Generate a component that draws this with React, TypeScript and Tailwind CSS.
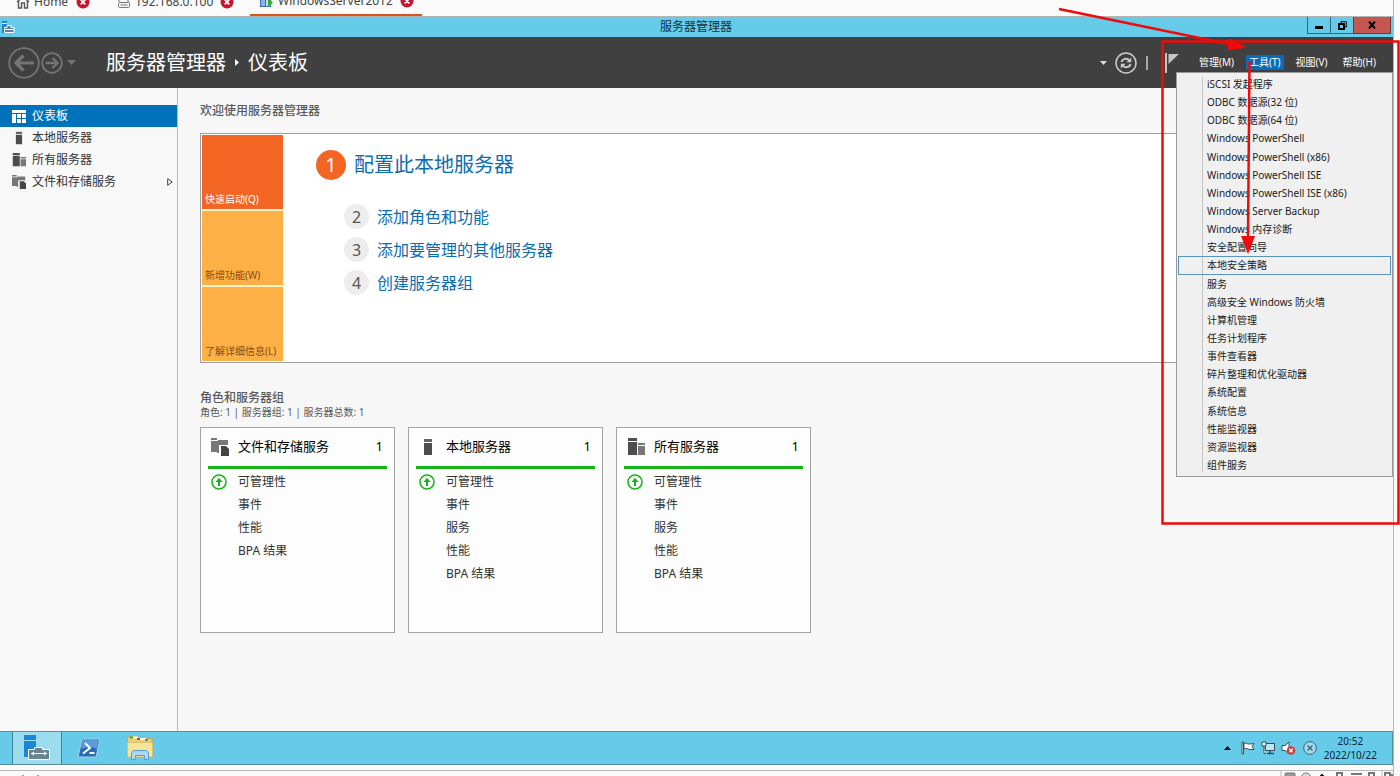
import type { ReactNode } from "react";

const tools = [
  "iSCSI 发起程序",
  "ODBC 数据源(32 位)",
  "ODBC 数据源(64 位)",
  "Windows PowerShell",
  "Windows PowerShell (x86)",
  "Windows PowerShell ISE",
  "Windows PowerShell ISE (x86)",
  "Windows Server Backup",
  "Windows 内存诊断",
  "安全配置向导",
  "本地安全策略",
  "服务",
  "高级安全 Windows 防火墙",
  "计算机管理",
  "任务计划程序",
  "事件查看器",
  "碎片整理和优化驱动器",
  "系统配置",
  "系统信息",
  "性能监视器",
  "资源监视器",
  "组件服务",
];

const menus = ["管理(M)", "工具(T)", "视图(V)", "帮助(H)"];

const steps = ["添加角色和功能", "添加要管理的其他服务器", "创建服务器组"];

function DashboardIcon() {
  return (
    <svg width="14" height="13" viewBox="0 0 14 13" fill="#fff" aria-hidden="true">
      <path d="M0 0h14v3H0zM0 4h4v9H0zM5 4h4v4H5zM10 4h4v4h-4zM5 9h4v4H5zM10 9h4v4h-4z" />
    </svg>
  );
}

function ServerIcon({ size = 14 }: { size?: number }) {
  return (
    <svg width={size} height={size} viewBox="0 0 18 18" fill="#4d4d4d" aria-hidden="true">
      <path d="M5 1h8v3H5z" fill="#666" />
      <path d="M5 5h8v12H5z" />
    </svg>
  );
}

function ServersIcon({ size = 14 }: { size?: number }) {
  return (
    <svg width={size} height={size} viewBox="0 0 18 18" fill="#4d4d4d" aria-hidden="true">
      <path d="M1 0h9v3H1zM1 4h9v13H1z" />
      <path d="M11 5h7v2h-7zM11 8h7v9h-7z" fill="#777" />
    </svg>
  );
}

function StorageIcon({ size = 14 }: { size?: number }) {
  return (
    <svg width={size} height={size} viewBox="0 0 18 18" fill="#777" aria-hidden="true">
      <path d="M0 0h6v2H0zM0 3h7V2h10v5h-7v8H6v-1H0z" />
      <path d="M8 7h7v10H8z" fill="#fff" />
      <path d="M10 8h5l3 3v7h-8z" fill="#444" />
    </svg>
  );
}

const nav = [
  { label: "仪表板", icon: <DashboardIcon />, active: true },
  { label: "本地服务器", icon: <ServerIcon /> },
  { label: "所有服务器", icon: <ServersIcon /> },
  { label: "文件和存储服务", icon: <StorageIcon />, more: true },
];

const cards = [
  { title: "文件和存储服务", icon: <StorageIcon size={18} />, rows: ["事件", "性能", "BPA 结果"] },
  { title: "本地服务器", icon: <ServerIcon size={18} />, rows: ["事件", "服务", "性能", "BPA 结果"] },
  { title: "所有服务器", icon: <ServersIcon size={18} />, rows: ["事件", "服务", "性能", "BPA 结果"] },
];

function CloseBadge() {
  return (
    <svg width="14" height="14" viewBox="0 0 14 14" aria-hidden="true">
      <circle cx="7" cy="7" r="6.5" fill="#c8142d" />
      <path d="M4.7 4.7l4.6 4.6M9.3 4.7L4.7 9.3" stroke="#fff" strokeWidth="1.8" />
    </svg>
  );
}

function Tab({ label, icon, className }: { label: string; icon: ReactNode; className: string }) {
  return (
    <div className={`flex h-7 items-center ${className}`}>
      {icon}
      <span className="flex-1 pl-1 text-xs text-[#444]">{label}</span>
      <button type="button" aria-label={`关闭 ${label}`}>
        <CloseBadge />
      </button>
    </div>
  );
}

function HostTabs() {
  return (
    <div className="flex h-[17px] items-end overflow-hidden border-b border-[#b5b5b5] bg-[#fafafa]">
      <Tab
        label="Home"
        className="w-[90px]"
        icon={
          <svg className="ml-4" width="14" height="14" viewBox="0 0 14 14" fill="none" stroke="#555" strokeWidth="1.4" aria-hidden="true">
            <path d="M1 7l6-5.5L13 7M2.5 6v7h3V8h3v5h3V6" />
          </svg>
        }
      />
      <Tab
        label="192.168.0.100"
        className="ml-[26px] w-[118px]"
        icon={
          <svg width="15" height="14" viewBox="0 0 15 14" fill="#f4f4f4" stroke="#777" aria-hidden="true">
            <path d="M3.5 7l-2-5h9l2 5" />
            <rect x="2.5" y="7.5" width="11" height="5" rx="1" />
            <path d="M4.5 10h7" />
          </svg>
        }
      />
      <Tab
        label="WindowsServer2012"
        className="ml-4 w-[172px] border-b-2 border-[#d9541e] pr-2 pl-2"
        icon={
          <svg className="ml-px" width="15" height="14" viewBox="0 0 15 14" aria-hidden="true">
            <rect x="1.5" y="1.5" width="6" height="11" fill="#8eb4e3" stroke="#3b6cb0" />
            <rect x="6.5" y="3.5" width="5" height="9" fill="#c8dcf2" stroke="#3b6cb0" />
            <path d="M9 4l5 4.500-5 4.500z" fill="#3cab2c" />
          </svg>
        }
      />
    </div>
  );
}

function TitleBar() {
  return (
    <div className="flex h-5 items-center bg-[#65cbe9]">
      <svg className="ml-px" width="14" height="14" viewBox="0 0 14 14" aria-hidden="true">
        <path d="M1 1h5v12H1z" fill="#1f86c9" />
        <path d="M1 3.500h5" stroke="#fff" />
        <path d="M3.500 7.500h2.500v-2h4v2h3v5H3.500z" fill="#5f8396" stroke="#fff" />
        <path d="M4 9.500h9" stroke="#fff" />
      </svg>
      <h1 className="flex-1 pl-[70px] text-center text-xs text-[#14303c]">服务器管理器</h1>
      <div className="flex h-full pr-0.5 pb-[3px]">
        <button type="button" aria-label="最小化" className="flex w-6 items-end justify-center border border-t-0 border-[#33697a] pb-1">
          <span className="h-[3px] w-2 bg-black" />
        </button>
        <button type="button" aria-label="还原" className="flex w-[22px] items-center justify-center border-b border-[#33697a]">
          <svg width="9" height="9" viewBox="0 0 9 9" fill="none" stroke="#000" aria-hidden="true">
            <path d="M3 2V.7h5.300V6H7" />
            <path d="M1 3h5v5H1z" strokeWidth="2" />
          </svg>
        </button>
        <button type="button" aria-label="关闭" className="flex w-[38px] items-center justify-center border border-t-0 border-[#6a3a3a] bg-[#c65750]">
          <svg width="8" height="8" viewBox="0 0 8 8" stroke="#000" strokeWidth="2" aria-hidden="true">
            <path d="M1 .5l6 7M7 .5l-6 7" />
          </svg>
        </button>
      </div>
    </div>
  );
}

function ToolsMenu() {
  return (
    <div
      role="menu"
      className="absolute top-[35px] right-0 z-10 flex h-[405px] w-[217px] flex-col border border-[#999] bg-[#f0f0f0] px-px py-0.5"
    >
      <span className="absolute top-1 bottom-1 left-[25px] w-px bg-[#c4c4c4]" />
      {tools.map((name) => (
        <button
          key={name}
          type="button"
          role="menuitem"
          className={`relative flex flex-1 items-center border pl-7 text-left text-[10px] leading-none whitespace-nowrap text-[#1a1a1a] ${
            name === "本地安全策略" ? "border-[#5a93bd]" : "border-transparent"
          }`}
        >
          {name}
        </button>
      ))}
    </div>
  );
}

function Header() {
  return (
    <header className="relative flex h-[51px] items-center bg-[#404040] text-white">
      <button type="button" aria-label="后退" className="ml-2">
        <svg width="32" height="32" viewBox="0 0 32 32" fill="none" stroke="#757575" aria-hidden="true">
          <circle cx="16" cy="16" r="14.800" strokeWidth="1.800" />
          <path d="M26 16H9M15.500 8.500L8 16l7.500 7.500" strokeWidth="3.200" />
        </svg>
      </button>
      <button type="button" aria-label="前进" className="ml-px">
        <svg width="22" height="22" viewBox="0 0 22 22" fill="none" stroke="#757575" aria-hidden="true">
          <circle cx="11" cy="11" r="9.800" strokeWidth="1.800" />
          <path d="M4.500 11h11M11.500 6l5 5-5 5" strokeWidth="2.300" />
        </svg>
      </button>
      <button type="button" aria-label="历史记录" className="ml-1">
        <svg width="9" height="6" viewBox="0 0 9 6" fill="#757575" aria-hidden="true">
          <path d="M0 0h9L4.500 5z" />
        </svg>
      </button>
      <nav className="ml-[30px] flex flex-1 items-center text-xl leading-none">
        <span>服务器管理器</span>
        <svg className="mx-[9px]" width="4" height="7" viewBox="0 0 4 7" fill="#fff" aria-hidden="true">
          <path d="M0 0l4 3.500L0 7z" />
        </svg>
        <span>仪表板</span>
      </nav>
      <svg width="7" height="4" viewBox="0 0 7 4" fill="#ddd" aria-hidden="true">
        <path d="M0 0h7L3.500 4z" />
      </svg>
      <button type="button" aria-label="刷新" className="ml-2">
        <svg width="22" height="22" viewBox="0 0 22 22" fill="none" stroke="#ccc" aria-hidden="true">
          <circle cx="11" cy="11" r="10" strokeWidth="1.500" />
          <path d="M6.500 10c.5-2.800 4.500-4.300 7.500-2M15.500 12c-.5 2.800-4.500 4.300-7.500 2" strokeWidth="2" />
          <path d="M16.200 5.500v4.800h-4.800zM5.800 16.500v-4.800h4.800z" fill="#ccc" stroke="none" />
        </svg>
      </button>
      <span className="ml-[9px] h-[14px] w-0.5 bg-[#aaa]" />
      <button type="button" aria-label="通知" className="ml-[17px]">
        <svg width="14" height="20" viewBox="0 0 14 20" fill="#c4c4c4" aria-hidden="true">
          <path d="M0 0h2v20H0zM3.500 1H14L3.500 11z" />
        </svg>
      </button>
      <div className="mr-[14px] ml-[17px] flex gap-[9px] text-[10px] leading-[15px]">
        {menus.map((m) => (
          <button key={m} type="button" className={`px-[3px] ${m === "工具(T)" ? "bg-[#0a6cb8]" : ""}`}>
            {m}
          </button>
        ))}
      </div>
      <ToolsMenu />
    </header>
  );
}

function Sidebar() {
  return (
    <aside className="w-[178px] shrink-0 border-r border-[#bbb] bg-[#f8f8f8] pt-[17px]">
      {nav.map((item) => (
        <a
          key={item.label}
          href="#"
          className={`flex h-[22px] items-center pr-1 pl-3 text-xs leading-none ${
            item.active ? "bg-[#0072bc] text-white" : "text-[#333]"
          }`}
        >
          {item.icon}
          <span className="flex-1 pl-1.5">{item.label}</span>
          {item.more && (
            <svg width="6" height="8" viewBox="0 0 6 8" fill="none" stroke="#444" aria-hidden="true">
              <path d="M.7.700L5.200 4 .7 7.300z" />
            </svg>
          )}
        </a>
      ))}
    </aside>
  );
}

function Welcome() {
  return (
    <section className="mt-[14px] flex border border-[#a0a0a0] bg-white p-px">
      <div className="flex w-[81px] flex-col gap-0.5 bg-[#fff3c9] text-[10px] leading-3">
        <button type="button" className="flex h-[74px] items-end bg-[#f26522] px-[3px] pb-1 text-white">
          快速启动(Q)
        </button>
        <button type="button" className="flex h-[74px] items-end bg-[#fcb045] px-[3px] pb-1 text-[#8a4b10]">
          新增功能(W)
        </button>
        <button type="button" className="flex h-[74px] items-end bg-[#fcb045] px-[3px] pb-1 text-[#8a4b10]">
          了解详细信息(L)
        </button>
      </div>
      <div className="pt-[15px] pl-[33px] text-[#0b6cb0]">
        <a href="#" className="flex items-center gap-2 text-xl leading-none">
          <span className="flex size-[30px] items-center justify-center rounded-full bg-[#f26522] text-white">1</span>
          配置此本地服务器
        </a>
        <ol className="mt-6 flex flex-col gap-2 pl-7">
          {steps.map((step, i) => (
            <li key={step}>
              <a href="#" className="flex items-center gap-2 text-base leading-none">
                <span className="flex size-[25px] items-center justify-center rounded-full bg-[#ededed] text-[#555]">
                  {i + 2}
                </span>
                {step}
              </a>
            </li>
          ))}
        </ol>
      </div>
    </section>
  );
}

function Card({ title, icon, rows }: { title: string; icon: ReactNode; rows: string[] }) {
  return (
    <article className="h-[206px] w-[195px] border border-[#a5a5a5] bg-[#fdfdfd] px-[7px] text-[#333]">
      <div className="flex h-[41px] items-center border-b-3 border-[#16b516] pr-1 pl-[3px] text-[13px] text-black">
        {icon}
        <h3 className="flex-1 pl-[9px]">{title}</h3>
        <span>1</span>
      </div>
      <ul className="pt-px text-xs leading-[23px]">
        <li className="flex items-center pl-[3px]">
          <svg width="16" height="16" viewBox="0 0 16 16" fill="none" stroke="#16b516" aria-hidden="true">
            <circle cx="8" cy="8" r="7" strokeWidth="1.600" />
            <path d="M8 12V6" strokeWidth="2" />
            <path d="M4.500 8L8 3.800 11.500 8z" fill="#16b516" stroke="none" />
          </svg>
          <span className="pl-[11px]">可管理性</span>
        </li>
        {rows.map((row) => (
          <li key={row} className="pl-[30px]">
            {row}
          </li>
        ))}
      </ul>
    </article>
  );
}

function Taskbar() {
  return (
    <footer className="flex h-[34px] items-stretch border border-l-0 border-[#5c8c9c] bg-[#65cbe9]">
      <button type="button" aria-label="服务器管理器" className="ml-3 flex w-[50px] items-center justify-center border-x border-[#3f7f94] bg-[#9bdcef]">
        <svg width="26" height="26" viewBox="0 0 26 26" aria-hidden="true">
          <path d="M0 0h12v22H0z" fill="#1b87d2" />
          <path d="M0 5.500h12" stroke="#9bdcef" />
          <path d="M4.500 14.500h6v-2h8v2h7v10h-21z" fill="#6b8494" stroke="#fff" />
          <path d="M7 18.500h16" stroke="#fff" />
          <path d="M7 18.500l3-2v4zM23 18.500l-3-2v4z" fill="#fff" />
        </svg>
      </button>
      <button type="button" aria-label="Windows PowerShell" className="ml-[15px]">
        <svg width="24" height="20" viewBox="0 0 24 20" aria-hidden="true">
          <path d="M5 1h18l-4 18H1z" fill="#2a6db5" stroke="#a9cfea" strokeLinejoin="round" />
          <path d="M5.500 2H22l-2 9c-6-3-11-2-16 0z" fill="#5b9bd8" />
          <path d="M8 5l5 5-7 5.500M12.500 15h5" fill="none" stroke="#fff" strokeWidth="2" />
        </svg>
      </button>
      <button type="button" aria-label="文件资源管理器" className="ml-[25px]">
        <svg width="28" height="26" viewBox="0 0 28 26" aria-hidden="true">
          <path d="M1.500 22V3.500l1-2h9l2 2h12.500v19z" fill="#efcf6b" stroke="#c9a548" />
          <path d="M5 2.500h7M12 4h8" stroke="#fff" strokeWidth="2" />
          <path d="M4 2.500h3" stroke="#2ea043" strokeWidth="2" />
          <path d="M11 4h3" stroke="#d8402f" strokeWidth="2" />
          <path d="M19 5h3" stroke="#3a8fd8" strokeWidth="2" />
          <path d="M1.500 7.500h25V22h-25z" fill="#f8e49a" stroke="#dcc06a" />
          <path d="M5.500 24.500v-7l2-2h13l2 2v7h-4v-4h-9v4z" fill="#a8d8f4" stroke="#5a9cc8" />
        </svg>
      </button>
      <div className="ml-auto flex items-center pr-[15px] text-[10px] leading-[14px] text-[#0c2730]">
        <svg width="7" height="4" viewBox="0 0 7 4" aria-hidden="true">
          <path d="M0 4h7L3.500 0z" />
        </svg>
        <svg className="ml-2.5" width="14" height="14" viewBox="0 0 14 14" fill="#fff" stroke="#39505a" aria-hidden="true">
          <path d="M1 1h1.500v12H1z" />
          <path d="M3 2.500c2-1 3 .5 4.500.5s2.500 0 5.500-.5l-2 3 2 3H8c-1.500-1.500-3-1-5-.5z" />
        </svg>
        <svg className="ml-1.5" width="15" height="14" viewBox="0 0 15 14" fill="none" stroke="#39505a" aria-hidden="true">
          <rect x="4.500" y="2.500" width="9" height="7" fill="#bfe6f3" />
          <path d="M9 10v2.500M6 12.500h7" strokeWidth="1.500" />
          <path d="M1 1h4v4H1zM3 5v7.500h2" fill="#fff" />
        </svg>
        <svg className="ml-[5px]" width="15" height="14" viewBox="0 0 15 14" aria-hidden="true">
          <path d="M1 4.500h3L8 1v12L4 9.500H1z" fill="#fff" stroke="#39505a" />
          <circle cx="10" cy="9.500" r="4.300" fill="#d23b3b" />
          <path d="M8.300 7.800l3.400 3.400M11.700 7.800l-3.400 3.400" stroke="#fff" strokeWidth="1.300" />
        </svg>
        <svg className="ml-[7px]" width="14" height="14" viewBox="0 0 14 14" fill="#a3dcee" stroke="#39606e" aria-hidden="true">
          <circle cx="7" cy="7" r="6.300" />
          <path d="M4.500 4.500l5 5M9.500 4.500l-5 5" strokeWidth="1.400" />
        </svg>
        <time className="ml-[7px] text-center">
          20:52
          <br />
          2022/10/22
        </time>
      </div>
    </footer>
  );
}

// Device icons of the host status bar, mostly below the fold
function StatusBar() {
  return (
    <div className="mt-[5px] flex h-[6px] justify-between overflow-hidden border-t border-[#bbb]">
      <svg className="ml-5" width="22" height="6" viewBox="0 0 22 6" fill="#999" aria-hidden="true">
        <path d="M2 4h2v2H2zM17 4h2v2h-2z" />
      </svg>
      <svg width="113" height="6" viewBox="0 0 113 6" fill="none" stroke="#777" aria-hidden="true">
        <path d="M1 0v6M102 0v6" stroke="#bbb" />
        <rect x="5" y="2" width="10" height="8" rx="1" fill="#999" />
        <circle cx="26" cy="7" r="5" fill="#ddd" />
        <path d="M42 3v3M40 5h4" stroke="#222" strokeWidth="2" />
        <path d="M57 6V2h5v4M71 3h11M89 6V2h5v4" strokeWidth="2" />
        <path d="M105 6V2h5v2h7" strokeWidth="2" />
      </svg>
    </div>
  );
}

function Annotation() {
  return (
    <svg
      className="pointer-events-none absolute top-0 right-0 z-20"
      width="345"
      height="530"
      viewBox="0 0 345 530"
      fill="none"
      stroke="#f00a0a"
      strokeWidth="2.500"
      aria-hidden="true"
    >
      <path d="M107.500 41.500h236v482h-236z" />
      <path d="M4 9l172 35.500M194.500 62L193 238" />
      <path d="M174 38.500l18 9-20 3zM186 236h14l-7 18z" fill="#f00a0a" stroke="none" />
    </svg>
  );
}

export default function App() {
  return (
    <div className="relative flex h-screen flex-col overflow-hidden bg-[#fafafa] font-['Noto_Sans','Noto_Sans_CJK_SC',sans-serif]">
      <div className="mr-[6px] flex min-h-0 flex-1 flex-col border-r border-[#b5b5b5]">
        <HostTabs />
        <TitleBar />
        <Header />
        <div className="flex min-h-0 flex-1">
          <Sidebar />
          <main className="min-w-0 flex-1 bg-[#f7f7f7] pt-[15px] pr-5 pl-[22px] text-[#5a5a5a]">
            <h2 className="text-xs font-medium">欢迎使用服务器管理器</h2>
            <Welcome />
            <h2 className="mt-[27px] text-xs font-medium">角色和服务器组</h2>
            <p className="text-[10px] leading-3">角色: 1 | 服务器组: 1 | 服务器总数: 1</p>
            <div className="mt-[9px] flex flex-wrap gap-[13px]">
              {cards.map((card) => (
                <Card key={card.title} {...card} />
              ))}
            </div>
          </main>
        </div>
        <Taskbar />
        <StatusBar />
      </div>
      <Annotation />
    </div>
  );
}
